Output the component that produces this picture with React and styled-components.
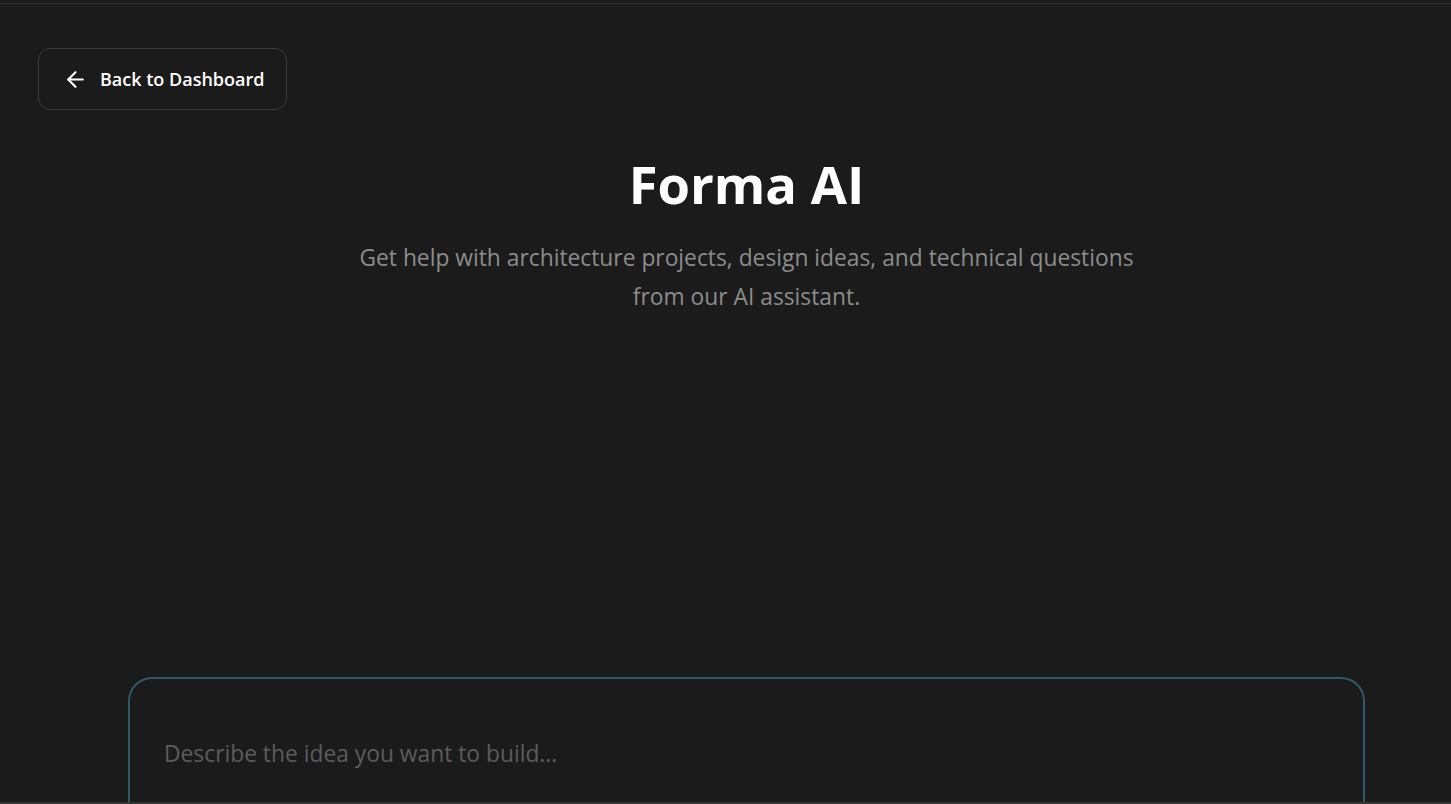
import styled, { createGlobalStyle } from "styled-components";
import React from "react";
import { ArrowLeft } from "lucide-react";

const GlobalStyle = createGlobalStyle`
    html, body {
        margin: 0;
        padding: 0;
        background: #1b1b1b;
        height: 100%;
        overflow: hidden;
    }
    * {
        box-sizing: border-box;
    }
`;

export default function App() {
    return (
        <>
            <GlobalStyle />
            <Page>
                <Frame>
                    <TopBar>
                        <BackButton type="button">
                            <ArrowLeft size={25} strokeWidth={2} />
                            <span>Back to Dashboard</span>
                        </BackButton>
                    </TopBar>

                    <Hero>
                        <Title>Forma AI</Title>
                        <Subtitle>
                            Get help with architecture projects, design ideas, and technical questions
                            <br />
                            from our AI assistant.
                        </Subtitle>
                    </Hero>

                    <Composer>
                        <PromptInput placeholder="Describe the idea you want to build..." />
                    </Composer>
                </Frame>
            </Page>
        </>
    );
}

const Page = styled.div`
    height: 804px;
    padding-top: 3px;
    background: #1b1b1b;
    font-family: "Open Sans", "Noto Sans", sans-serif;
`;

const Frame = styled.main`
    height: 801px;
    border-top: 1px solid #333333;
    border-bottom: 2px solid #333333;
    display: flex;
    flex-direction: column;
    overflow: hidden;
`;

const TopBar = styled.div`
    padding: 44px 0 0 38px;
`;

const BackButton = styled.button`
    display: inline-flex;
    align-items: center;
    gap: 12px;
    height: 62px;
    padding: 0 22px 0 24px;
    background: transparent;
    border: 1px solid #3a3a3a;
    border-radius: 12px;
    color: #ffffff;
    font-family: inherit;
    font-size: 18px;
    font-weight: 600;
    cursor: pointer;
`;

const Hero = styled.section`
    display: flex;
    flex-direction: column;
    align-items: center;
    padding-left: 42px;
    margin-top: 38px;
`;

const Title = styled.h1`
    margin: 0;
    font-size: 52.5px;
    font-weight: 700;
    line-height: 72px;
    color: #ffffff;
`;

const Subtitle = styled.p`
    margin: 18px 0 0;
    font-size: 22.8px;
    line-height: 39px;
    color: #8c8c8c;
    text-align: center;
`;

const Composer = styled.div`
    margin: auto 86px 0 128px;
    height: 125px;
    border: 2px solid #2e5966;
    border-bottom: none;
    border-radius: 24px 24px 0 0;
    padding: 58px 32px 0;
`;

const PromptInput = styled.input`
    width: 100%;
    background: transparent;
    border: none;
    outline: none;
    font-family: inherit;
    font-size: 22.8px;
    color: #cccccc;

    &::placeholder {
        color: #5c5c5c;
    }
`;
